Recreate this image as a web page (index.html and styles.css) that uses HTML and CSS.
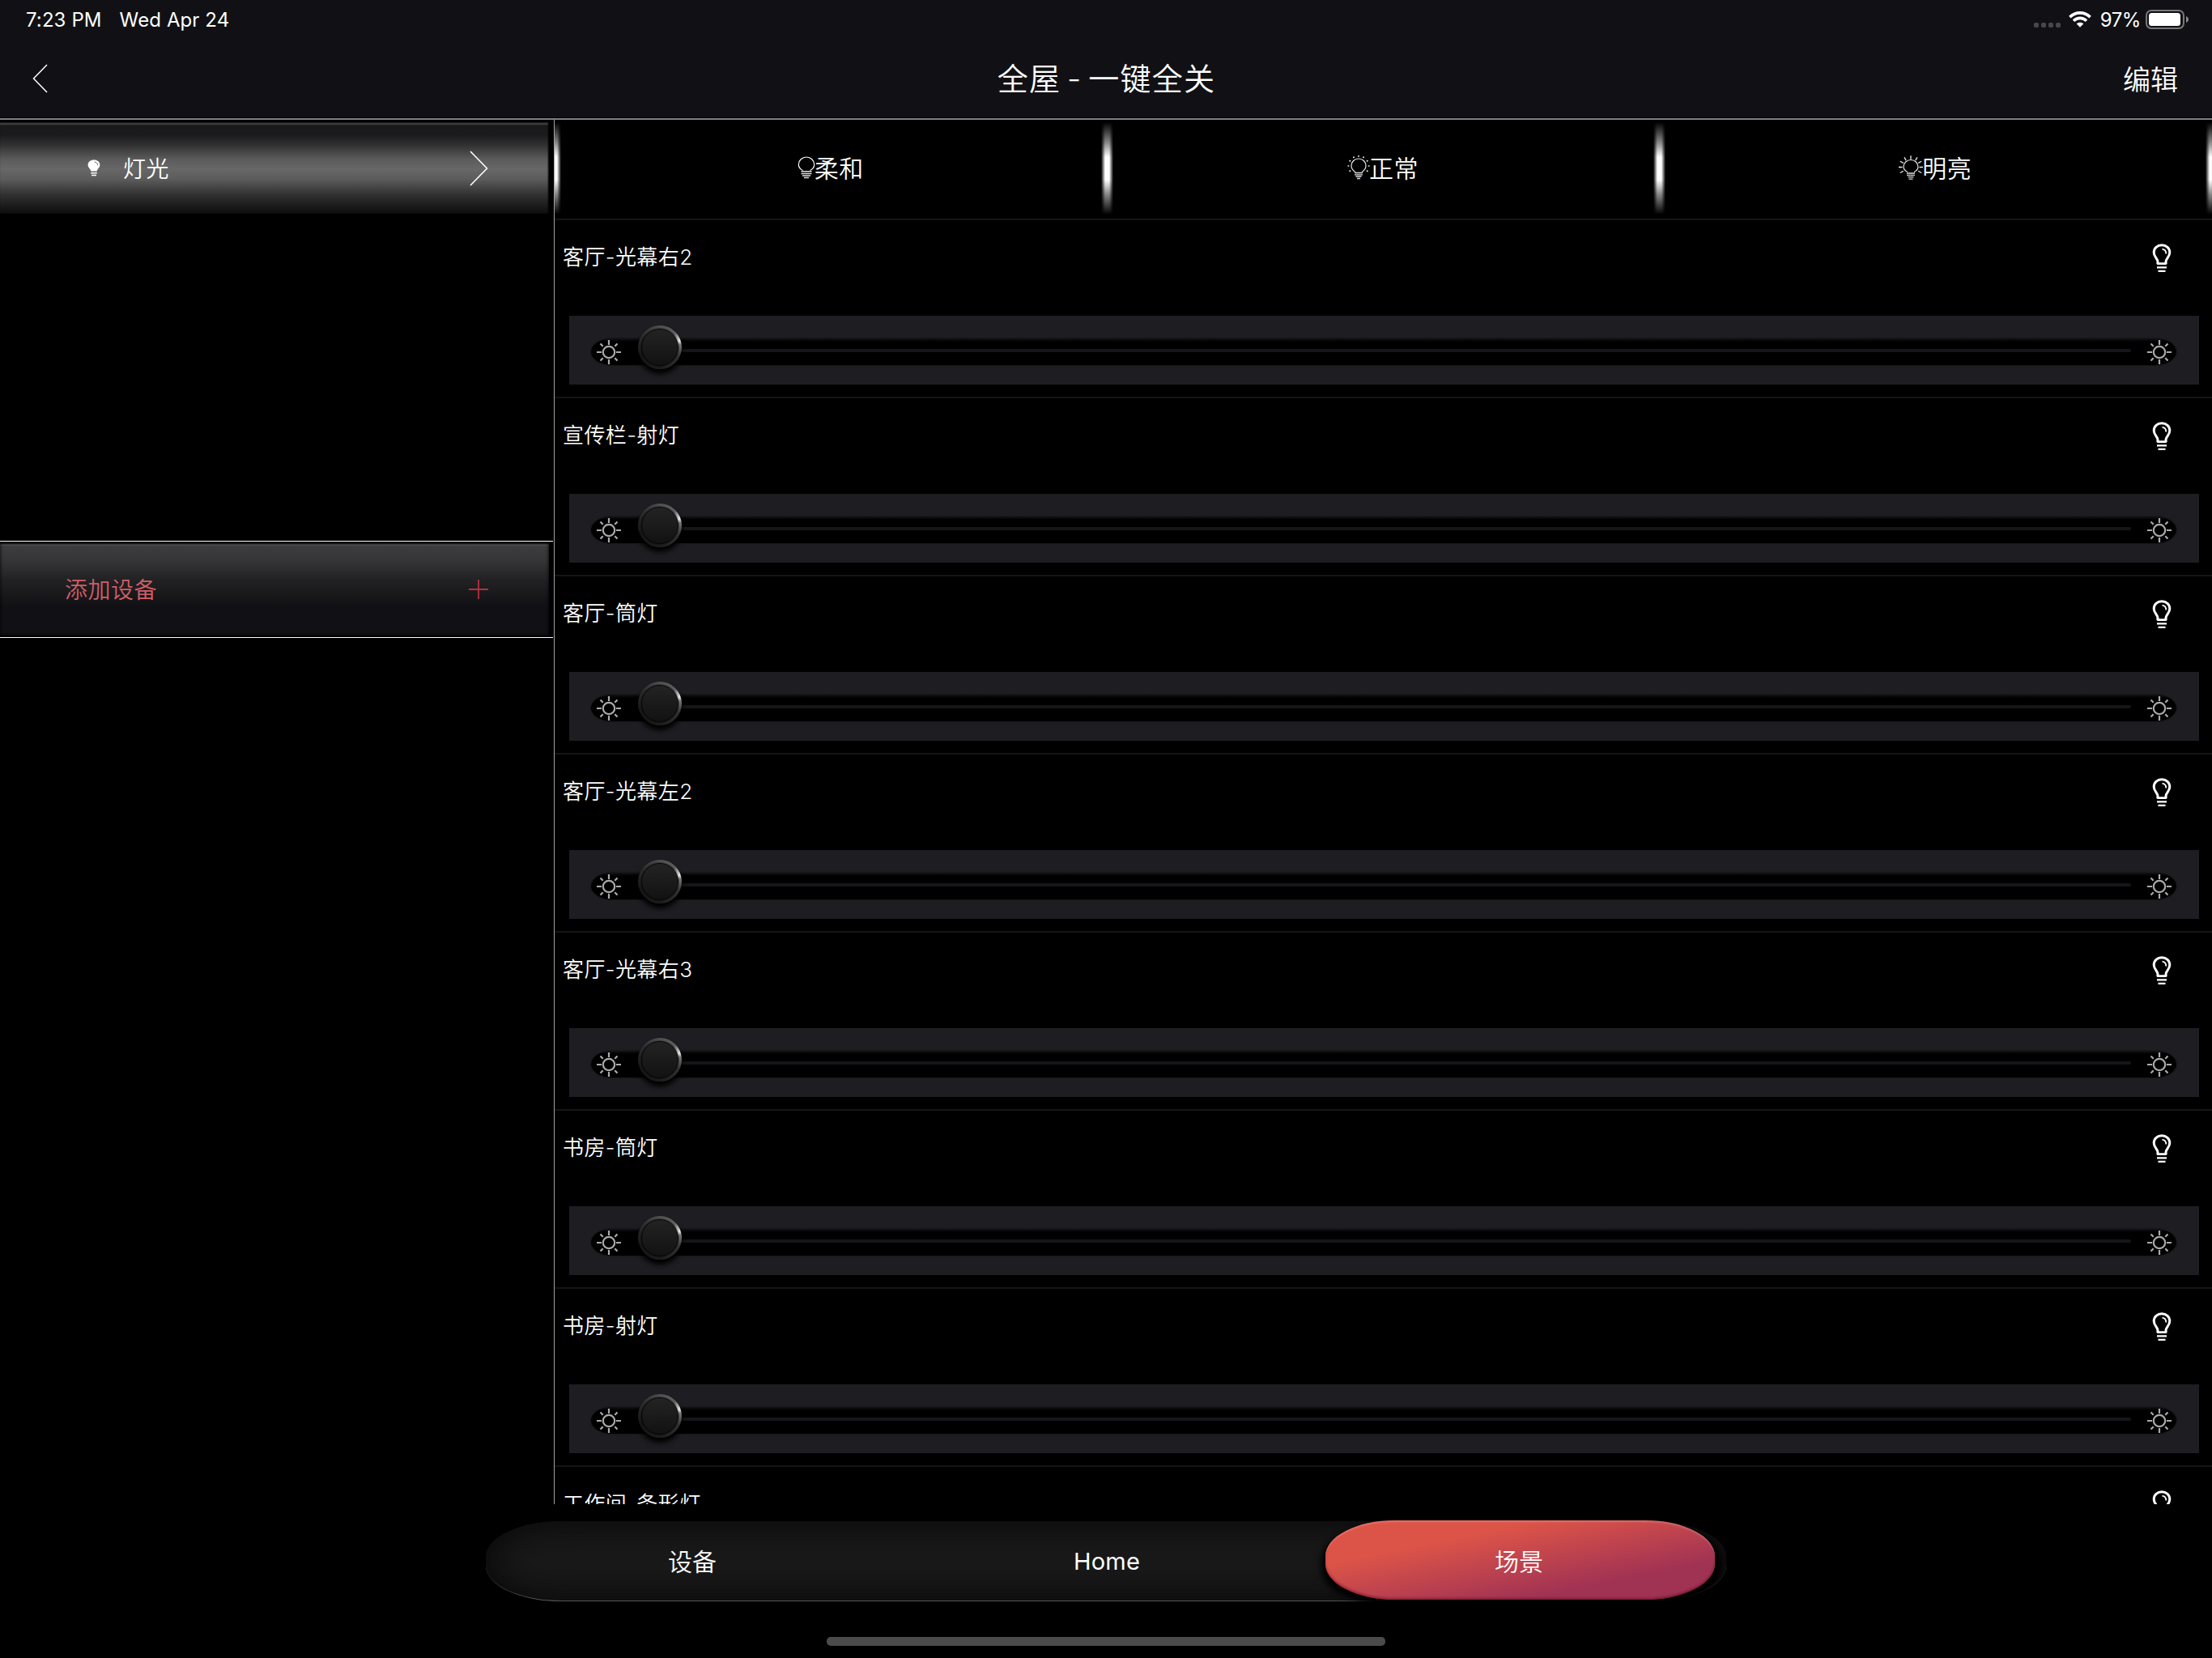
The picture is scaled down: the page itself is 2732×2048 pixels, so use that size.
FILE: index.html
```html
<!DOCTYPE html>
<html lang="zh-CN">
<head>
    <meta charset="UTF-8">
    <meta name="viewport" content="width=device-width, initial-scale=1.0">
    <title>全屋 - 一键全关</title>
    <link rel="stylesheet" href="styles.css">
</head>
<body>
    <!-- Shared icons -->
    <svg class="sprite">
        <symbol id="sun" viewBox="0 0 30 30">
            <g fill="none" stroke="#aaa" stroke-width="2.200">
                <circle cx="15" cy="15" r="7.2"/>
                <path d="M15 0v6M15 24v6M0 15h6M24 15h6M4.500 4.500l3.200 3.200M22.300 22.300l3.200 3.200M25.500 4.500l-3.200 3.200M7.700 22.300l-3.200 3.200"/>
            </g>
        </symbol>
        <symbol id="bulb" viewBox="0 0 24 36">
            <path d="M7 25.200V22.500C7 18.500 2.200 16.500 2.200 10.800C2.200 5.600 6.400 1.800 12 1.800S21.800 5.600 21.800 10.800C21.800 16.500 17 18.500 17 22.500V25.200" fill="none" stroke="#fff" stroke-width="3"/>
            <path d="M5.800 23.200h12.400v1.300q0 1.500-1.500 1.500h-9.400q-1.500 0-1.500-1.500zM6 28.200h12v2.300H6zM7.500 32.800h9v2.200h-9z" fill="#fff"/>
            <path d="M12.500 6.600C15.800 7 17.300 9.300 17.300 12.500" fill="none" stroke="#fff" stroke-width="1.800"/>
        </symbol>
    </svg>

    <header class="header">
        <div class="status-bar">
            <span class="time">7:23 PM</span>
            <span class="date">Wed Apr 24</span>
            <span class="dots"><i></i><i></i><i></i><i></i></span>
            <svg class="wifi" viewBox="0 0 28 20">
                <g fill="none" stroke="#fff" stroke-width="3.600">
                    <path d="M1.400 7.100C8.500 0.100 19.500 0.100 26.600 7.100"/>
                    <path d="M6 11.700C10.500 7.300 17.500 7.300 22 11.700"/>
                </g>
                <path d="M14 19.700L9.600 15.300C12 13.100 16 13.100 18.400 15.300Z" fill="#fff"/>
            </svg>
            <span class="percent">97%</span>
            <svg class="battery" viewBox="0 0 54 24">
                <rect x="1" y="1" width="46" height="22" rx="6" fill="none" stroke="#77777a" stroke-width="2"/>
                <rect x="4" y="4" width="39" height="16" rx="3.500" fill="#fff"/>
                <path d="M50 8C54 9.500 54 14.500 50 16Z" fill="#88888b"/>
            </svg>
        </div>
        <div class="nav-bar">
            <svg class="back" viewBox="0 0 19 36"><path d="M18 1L1.500 18L18 35" fill="none" stroke="#fff" stroke-width="1.500"/></svg>
            <h1 class="title">全屋 - 一键全关</h1>
            <span class="edit">编辑</span>
        </div>
    </header>

    <main class="content">
        <aside class="sidebar">
            <div class="cell cell-light">
                <svg class="cell-bulb" viewBox="0 0 16 22">
                    <path d="M4.200 14.500C4.200 11.500 0.600 10.500 0.600 6.800C0.600 3 3.800 0.600 8 0.600S15.400 3 15.400 6.800C15.400 10.500 11.800 11.500 11.800 14.500Z" fill="#fff"/>
                    <path d="M8.700 3C11 3.200 12.500 4.600 12.600 7" fill="none" stroke="#666" stroke-width="1"/>
                    <path d="M4.200 16.700h7.600M5 19.500h6" stroke="#fff" stroke-width="1.500"/>
                </svg>
                <span>灯光</span>
                <svg class="arrow" viewBox="0 0 23 44"><path d="M1 1L21.500 22L1 43" fill="none" stroke="#fff" stroke-width="1.600"/></svg>
            </div>
            <div class="add-row">
                <div class="cell cell-add">
                    <span>添加设备</span>
                    <svg class="plus" viewBox="0 0 24 24"><path d="M12 0v24M0 12h24" stroke="#b5303f" stroke-width="1.800"/></svg>
                </div>
            </div>
        </aside>

        <section class="main">
            <div class="tabs">
                <div class="tab">
                    <svg class="tab-soft" viewBox="0 0 22 28">
                        <path d="M6.500 17.500C3.500 16 1.300 13.500 1.300 10.200A9.700 9.200 0 0 1 20.700 10.200C20.700 13.500 18.500 16 15.500 17.500" fill="none" stroke="#fff" stroke-width="1.200"/>
                        <path d="M4.500 18.700h13M4.500 21.500h13M6 24h10M8 26.500h6" stroke="#ddd" stroke-width="1.400"/>
                    </svg><span>柔和</span>
                </div>
                <div class="tab">
                    <svg class="tab-normal" viewBox="0 0 28 30">
                        <path d="M10 20.500C6.700 18.500 5 16 5 12.700A9 8.700 0 0 1 23 12.700C23 16 21.300 18.500 18 20.500" fill="none" stroke="#eee" stroke-width="1.200"/>
                        <path d="M9 21.500h10M9 23.800h10M10.500 26h7M12 28.500h4" stroke="#ddd" stroke-width="1.300"/>
                        <path d="M14 0v1.800M7.500 1.500l.9 1.600M20.500 1.500l-.9 1.600M2.500 6.300l1.600.9M25.500 6.300l-1.600.9M.5 13h1.800M25.700 13h1.800M2.500 19.700l1.600-.9M25.500 19.700l-1.600-.9" stroke="#eee" stroke-width="1.600"/>
                    </svg><span>正常</span>
                </div>
                <div class="tab">
                    <svg class="tab-bright" viewBox="0 0 30 30">
                        <path d="M11 20.500C8 19 6 16.700 6 14A9 8.500 0 0 1 24 14C24 16.700 22 19 19 20.500" fill="none" stroke="#eee" stroke-width="1.200"/>
                        <path d="M10 22h10M10 24.300h10M11.500 26.700h7M12.500 29.200h5" stroke="#ddd" stroke-width="1.300"/>
                        <path d="M15 .3v4.500M7 2.300l2.200 3.800M23 2.300l-2.200 3.800M1.800 7.200l4 2.200M28.200 7.200l-4 2.200M0 14.500h4.500M25.500 14.500H30M1.800 21.500l4-2.200M28.200 21.500l-4-2.200" stroke="#eee" stroke-width="1.300"/>
                    </svg><span>明亮</span>
                </div>
                <i class="glow glow-1"></i>
                <i class="glow glow-2"></i>
                <i class="glow glow-3"></i>
                <i class="glow glow-4"></i>
            </div>
            <div class="devices" id="devices"></div>
        </section>
    </main>

    <nav class="bottom-nav">
        <span class="nav-item">设备</span>
        <span class="nav-item home">Home</span>
        <span class="nav-item active"><b>场景</b></span>
    </nav>
    <div class="home-indicator"></div>

    <script src="script.js"></script>
</body>
</html>
```
FILE: styles.css
```css
* { box-sizing: border-box; }
body { margin: 0; width: 2732px; height: 2048px; overflow: hidden; background-color: #000; color: #fff; font-family: Inter, "Noto Sans CJK SC", sans-serif; font-weight: 350; display: flex; flex-direction: column; }
svg { display: block; flex: none; }
.sprite { display: none; }

/* Header */
.header { height: 148px; flex: none; background-color: #111115; border-bottom: 2px solid #807e88; box-shadow: inset 0 -1px 0 #000; }
.status-bar { height: 48px; padding: 0 30px 0 32px; display: flex; align-items: center; font-size: 24px; font-weight: 420; letter-spacing: 0.1px; }
.date { margin-left: 22px; }
.dots { display: flex; gap: 3px; margin-left: auto; margin-top: 14px; }
.dots i { width: 6px; height: 6px; border-radius: 2px; background-color: #48484c; }
.wifi { width: 28px; height: 20px; margin-left: 10px; }
.percent { margin-left: 11px; letter-spacing: -0.4px; }
.battery { width: 54px; height: 24px; margin-left: 6px; margin-right: -2px; }
.nav-bar { height: 98px; padding: 0 42px 0 40px; display: flex; align-items: center; justify-content: space-between; }
.back { width: 19px; height: 36px; margin-right: 47px; }
.title { margin: -5px 0 0 5px; font-size: 38px; font-weight: 350; letter-spacing: 1.2px; word-spacing: -4px; }
.edit { margin-top: -1px; font-size: 34px; }

/* Left column */
.content { height: 1710px; flex: none; display: flex; overflow: hidden; }
.sidebar { width: 685px; border-right: 1px solid #a0a0a0; }
.cell { width: 678px; height: 113px; display: flex; align-items: center; font-size: 28px; letter-spacing: 0.5px; }
.cell span { margin-top: -2px; }
.cell-light { margin-top: 3px; padding: 0 75px 0 108px; background: linear-gradient(#222 0, #464648 2px, #19191b 4px, #1b1b1d 16px, #303031 28px, #5c5c5d 46px, #676768 58px, #5c5c5d 70px, #303031 90px, #0d0d0e 113px); box-shadow: inset -1px 0 2px #000; }
.cell-bulb { width: 16px; height: 22px; margin-right: 28px; }
.arrow { width: 23px; height: 44px; margin-left: auto; }
.add-row { width: 683px; height: 120px; margin-top: 404px; border-top: 1px solid #fff; border-bottom: 1px solid #fff; padding-top: 2px; }
.cell-add { height: 114px; padding: 0 75px 0 80px; color: #d25e66; background: linear-gradient(#222 0, #5a5a5c 2px, #3c3c3e 4px, #363638 20px, #212124 46px, #111115 78px); box-shadow: inset 0 0 4px #000; }
.plus { width: 24px; height: 24px; margin-left: auto; }

/* Scene tabs */
.main { width: 2047px; position: relative; }
.tabs { height: 124px; padding: 0 0 5px; display: flex; position: relative; border-bottom: 2px solid #151515; }
.tab { flex: 1; display: flex; align-items: center; justify-content: center; font-size: 30px; letter-spacing: 0.5px; }
.tab span { margin: -2px 1px 0 -1px; }
.tab-soft { width: 22px; height: 28px; }
.tab-normal { width: 28px; height: 30px; }
.tab-bright { width: 30px; height: 30px; }
.glow { position: absolute; top: 3px; width: 15px; height: 114px; background: linear-gradient(90deg, #000, transparent 5px, transparent 10px, #000), linear-gradient(#000, #888 22%, #fff 38%, #fff 62%, #888 78%, #000); }
.glow-1 { left: -7px; clip-path: inset(0 0 0 7px); }
.glow-2 { left: 675px; }
.glow-3 { left: 1357px; }
.glow-4 { left: 2039px; }

/* Device rows */
.device { height: 220px; border-bottom: 2px solid #151515; padding: 0 16px 0 18px; }
.device-head { height: 118px; padding: 29px 34px 0 0; display: flex; justify-content: space-between; align-items: flex-start; }
.device-name { margin: -1px 0 0 -8px; font-size: 26px; line-height: 36px; letter-spacing: 0.4px; }
.device-bulb { width: 24px; height: 36px; }
.slider { height: 85px; background-color: #1e1d22; padding: 28px 28px 23px 27px; }
.slider-track { height: 33px; border-radius: 27px / 17px; background: linear-gradient(#131313, #000 4px); box-shadow: 0 0 2px #0c0c0e; display: flex; align-items: center; padding: 1px 6px 0 7px; }
.slider-track .sun { width: 30px; height: 30px; }
.line { flex: 1; height: 4px; margin: -4px 20px 0 21px; background-color: #15151a; border-radius: 2px; display: flex; align-items: center; }
.knob { width: 54px; height: 54px; flex: none; margin: -8px 0 0 0; border-radius: 50%; background: conic-gradient(#505050, #606060 13%, #eee 20%, #777 23%, #333 32%, #1c1c1c 50%, #161616 68%, #2c2c2c 85%, #505050); box-shadow: 0 6px 6px #000; padding: 4px; }
.knob i { display: block; width: 46px; height: 46px; border-radius: 50%; background: linear-gradient(#232323, #121212); border: 1px solid #050505; box-shadow: 0 0 2px #000; }

/* Bottom navigation */
.bottom-nav { width: 1532px; height: 99px; flex: none; margin: 21px 0 0 600px; display: flex; border-radius: 93px / 44px; background-color: #191919; border-bottom: 1px solid #555; box-shadow: inset 0 0 40px 4px #080808; font-size: 30px; }
.nav-item { flex: 1; display: flex; align-items: center; justify-content: center; padding: 0 2px 3px 0; }
.home { padding: 0; font-weight: 400; font-size: 29px; letter-spacing: 0.2px; }
.active { padding: 0 0 2px; }
.nav-item b { width: 481px; height: 98px; padding: 0 2px 0 0; display: flex; align-items: center; justify-content: center; font-weight: 350; border-radius: 86px / 44px; background: linear-gradient(to bottom right, #dc5448 28%, #a03254 76%); box-shadow: inset 0 2px 2px rgba(255,180,180,0.3), inset 0 -2px 3px rgba(90,0,20,0.5), -5px 6px 9px #000, 8px 6px 9px #000; }
.home-indicator { width: 690px; height: 11px; flex: none; margin: 44px auto 0; border-radius: 5px; background-color: #4b4b4b; }
```
FILE: script.js
```js
var names = ['客厅-光幕右2', '宣传栏-射灯', '客厅-筒灯', '客厅-光幕左2', '客厅-光幕右3', '书房-筒灯', '书房-射灯', '工作间-条形灯'];

document.getElementById('devices').innerHTML = names.map(function (name) {
    return '<div class="device">' +
        '<div class="device-head"><span class="device-name">' + name + '</span>' +
        '<svg class="device-bulb"><use href="#bulb"/></svg></div>' +
        '<div class="slider"><div class="slider-track">' +
        '<svg class="sun"><use href="#sun"/></svg>' +
        '<div class="line"><div class="knob"><i></i></div></div>' +
        '<svg class="sun"><use href="#sun"/></svg>' +
        '</div></div></div>';
}).join('');
```
